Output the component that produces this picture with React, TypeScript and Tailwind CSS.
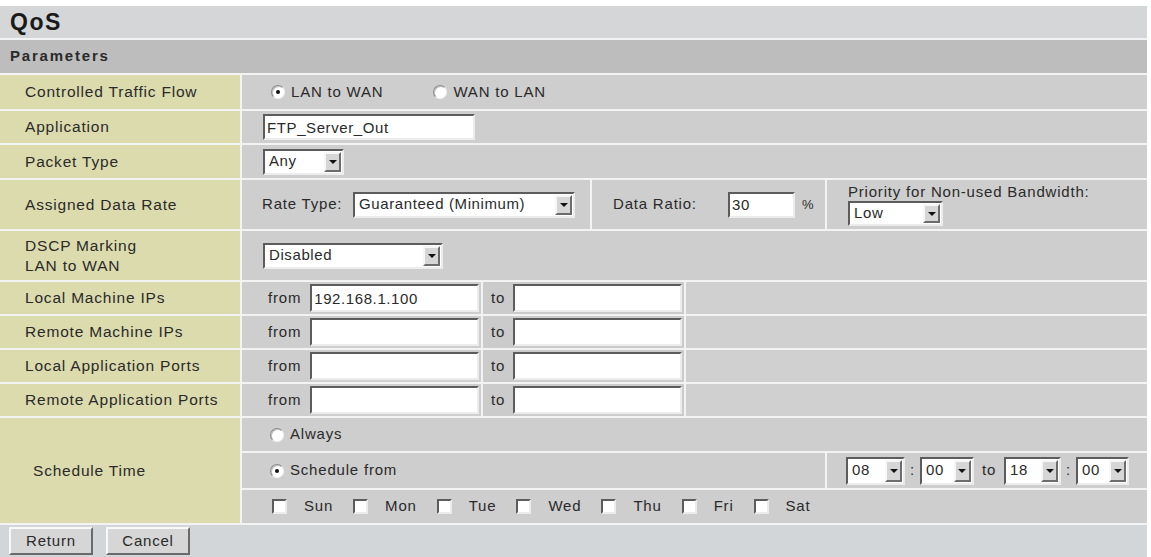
import React from 'react';

const inset =
    'bg-white border-2 border-t-[#5c5c5c] border-l-[#5c5c5c] border-r-[#ececec] border-b-[#ececec]';

function TextBox({ value = '', className = '' }: { value?: string; className?: string }) {
    return (
        <input
            readOnly
            defaultValue={value}
            className={`${inset} ${className} px-[2px] outline-none text-[15px] tracking-[0.6px] text-[#2a2a2a]`}
        />
    );
}

function Select({ value, className = '' }: { value: string; className?: string }) {
    return (
        <div className={`${inset} ${className} flex items-stretch`}>
            <span className="flex-1 flex items-center pl-[4px] text-[15px] tracking-[0.6px] whitespace-nowrap overflow-hidden">
                {value}
            </span>
            <span className="w-[17px] my-[1px] mr-[1px] bg-[#d6d6d6] border-2 border-t-[#f6f6f6] border-l-[#f6f6f6] border-r-[#6c6c6c] border-b-[#6c6c6c] flex items-center justify-center">
                <span className="w-0 h-0 border-l-[4px] border-r-[4px] border-t-[4px] border-l-transparent border-r-transparent border-t-[#111]" />
            </span>
        </div>
    );
}

function Radio({ checked = false }: { checked?: boolean }) {
    return (
        <span className="w-[14px] h-[14px] shrink-0 rounded-full bg-white border border-t-[#8a8a8a] border-l-[#8a8a8a] border-r-[#f2f2f2] border-b-[#f2f2f2] shadow-[inset_1px_1px_0_#c0c0c0] flex items-center justify-center">
            {checked && <span className="w-[4px] h-[4px] rounded-full bg-[#111]" />}
        </span>
    );
}

function Checkbox() {
    return <span className={`${inset} w-[15px] h-[15px] shrink-0`} />;
}

function Row({ label, h, children }: { label: React.ReactNode; h: string; children: React.ReactNode }) {
    return (
        <div className={`flex gap-[2px] ${h}`}>
            <div className="w-[240px] shrink-0 bg-[#dcdbad] flex items-center pl-[25px] text-[15.5px] tracking-[0.8px] leading-[20px]">
                {label}
            </div>
            <div className="flex-1 flex gap-[2px]">{children}</div>
        </div>
    );
}

function RangeRow({ label, from = '' }: { label: string; from?: string }) {
    return (
        <Row label={label} h="h-[32px]">
            <div className="w-[239px] bg-[#cecece] flex items-center pl-[26px] gap-[9px]">
                <span>from</span>
                <TextBox value={from} className="w-[169px] h-[28px]" />
            </div>
            <div className="w-[201px] bg-[#cbcbcb] flex items-center pl-[8px] gap-[8px]">
                <span>to</span>
                <TextBox className="w-[169px] h-[28px]" />
            </div>
            <div className="flex-1 bg-[#d0d0d0]" />
        </Row>
    );
}

const days = ['Sun', 'Mon', 'Tue', 'Wed', 'Thu', 'Fri', 'Sat'];

export default function App() {
    return (
        <div className="w-[1151px] h-[557px] overflow-hidden bg-white pt-[6px] pr-[4px] font-['Liberation_Sans',Arial,sans-serif] text-[#2a2a2a] text-[15px] tracking-[0.8px]">
            <div className="flex flex-col gap-[2px] bg-[#f3f3f3]">
                <div className="h-[32px] bg-[#d4d6d8] flex items-center pl-[10px] text-[23px] font-bold tracking-[1.5px] text-[#1a1a1a]">
                    QoS
                </div>
                <div className="h-[33px] bg-[#bdbdbd] flex items-center pl-[10px] text-[15px] font-bold tracking-[1.8px]">
                    Parameters
                </div>

                <Row label="Controlled Traffic Flow" h="h-[34px]">
                    <div className="flex-1 bg-[#cecece] flex items-center pl-[29px]">
                        <Radio checked />
                        <span className="ml-[6px]">LAN to WAN</span>
                        <span className="ml-[50px]">
                            <Radio />
                        </span>
                        <span className="ml-[6px]">WAN to LAN</span>
                    </div>
                </Row>

                <Row label="Application" h="h-[32px]">
                    <div className="flex-1 bg-[#cecece] flex items-center pl-[21px]">
                        <TextBox value="FTP_Server_Out" className="w-[212px] h-[26px]" />
                    </div>
                </Row>

                <Row label="Packet Type" h="h-[33px]">
                    <div className="flex-1 bg-[#cecece] flex items-center pl-[21px]">
                        <Select value="Any" className="w-[81px] h-[26px]" />
                    </div>
                </Row>

                <Row label="Assigned Data Rate" h="h-[49px]">
                    <div className="w-[348px] bg-[#cecece] flex items-center pl-[20px]">
                        <span className="w-[91px]">Rate Type:</span>
                        <Select value="Guaranteed (Minimum)" className="w-[222px] h-[26px]" />
                    </div>
                    <div className="w-[233px] bg-[#cecece] flex items-center pl-[21px]">
                        <span className="w-[115px]">Data Ratio:</span>
                        <TextBox value="30" className="w-[67px] h-[26px]" />
                        <span className="ml-[7px] text-[13px]">%</span>
                    </div>
                    <div className="flex-1 bg-[#cecece] flex flex-col justify-center pl-[21px]">
                        <span className="leading-[18px]">Priority for Non-used Bandwidth:</span>
                        <Select value="Low" className="w-[95px] h-[25px]" />
                    </div>
                </Row>

                <Row
                    label={
                        <span>
                            DSCP Marking
                            <br />
                            LAN to WAN
                        </span>
                    }
                    h="h-[49px]"
                >
                    <div className="flex-1 bg-[#cecece] flex items-center pl-[21px]">
                        <Select value="Disabled" className="w-[180px] h-[26px]" />
                    </div>
                </Row>

                <RangeRow label="Local Machine IPs" from="192.168.1.100" />
                <RangeRow label="Remote Machine IPs" />
                <RangeRow label="Local Application Ports" />
                <RangeRow label="Remote Application Ports" />

                <div className="flex gap-[2px] h-[105px]">
                    <div className="w-[240px] shrink-0 bg-[#dcdbad] flex items-center pl-[33px] text-[15.5px] tracking-[0.8px]">
                        Schedule Time
                    </div>
                    <div className="flex-1 flex flex-col gap-[2px]">
                        <div className="h-[34px] bg-[#cecece] flex items-center pl-[28px]">
                            <Radio />
                            <span className="ml-[6px]">Always</span>
                        </div>
                        <div className="h-[35px] flex gap-[2px]">
                            <div className="w-[583px] bg-[#cecece] flex items-center pl-[28px]">
                                <Radio checked />
                                <span className="ml-[6px]">Schedule from</span>
                            </div>
                            <div className="flex-1 bg-[#cecece] flex items-center pl-[19px]">
                                <Select value="08" className="w-[59px] h-[28px]" />
                                <span className="mx-[5px]">:</span>
                                <Select value="00" className="w-[54px] h-[28px]" />
                                <span className="mx-[8px]">to</span>
                                <Select value="18" className="w-[57px] h-[28px]" />
                                <span className="mx-[5px]">:</span>
                                <Select value="00" className="w-[53px] h-[28px]" />
                            </div>
                        </div>
                        <div className="h-[34px] bg-[#cecece] flex items-center pl-[30px] gap-[20px]">
                            {days.map((d) => (
                                <span key={d} className="flex items-center gap-[17px]">
                                    <Checkbox />
                                    <span>{d}</span>
                                </span>
                            ))}
                        </div>
                    </div>
                </div>

                <div className="h-[32px] bg-[#d3d6d8] flex items-center pl-[9px] gap-[13px]">
                    {['Return', 'Cancel'].map((b) => (
                        <button
                            key={b}
                            className="w-[84px] h-[28px] bg-[#d6d6d6] border-2 border-t-[#f8f8f8] border-l-[#f8f8f8] border-r-[#6a6a6a] border-b-[#6a6a6a] text-[15px] tracking-[0.8px]"
                        >
                            {b}
                        </button>
                    ))}
                </div>
            </div>
        </div>
    );
}
